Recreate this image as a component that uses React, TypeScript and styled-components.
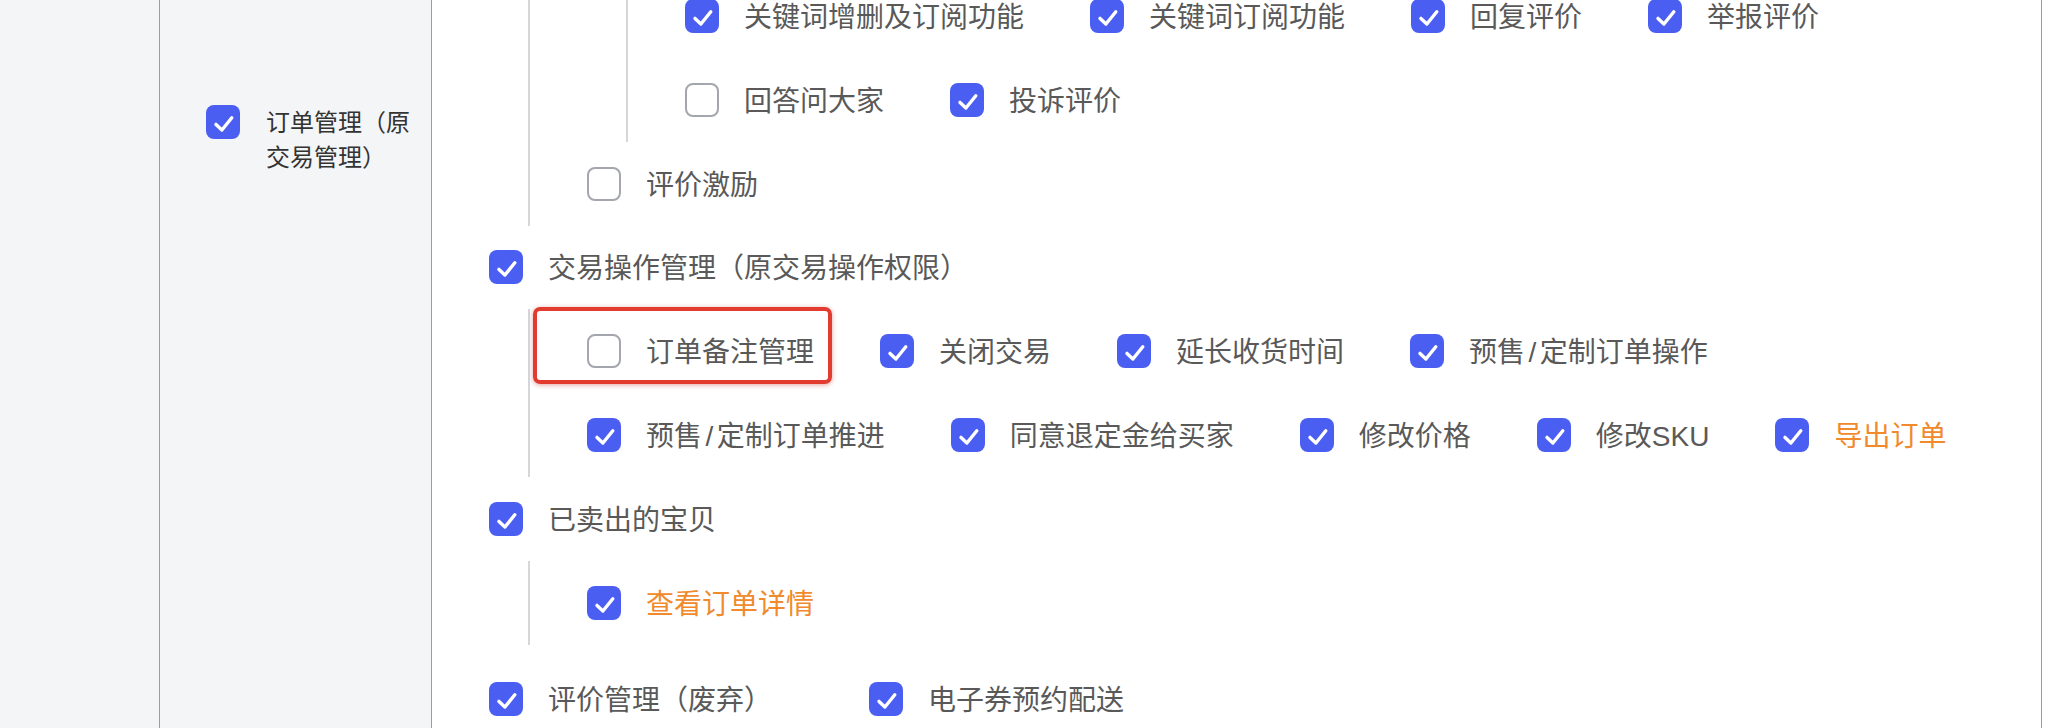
import React from "react";
import styled, { createGlobalStyle } from "styled-components";

const blue = "#4b5ef2";
const orange = "#f08a2c";
const ruleGray = "#9b9ca1";
const guideGray = "#d6d7db";
const panelGray = "#f4f5f7";

const GlobalStyle = createGlobalStyle`
	html,
	body {
		margin: 0;
		padding: 0;
		background: #fff;
		overflow: hidden;
	}

	body {
		font-family: "Liberation Sans", "Noto Sans CJK SC", sans-serif;
	}
`;

const Table = styled.div`
	display: grid;
	grid-template-columns: 160px 272px 1610px 1fr;
	width: 2068px;
	height: 728px;
	overflow: hidden;
`;

const Gutter = styled.div`
	background: ${panelGray};
	border-right: 1px solid ${ruleGray};
`;

const GroupCell = styled.div`
	display: flex;
	align-items: flex-start;
	gap: 26px;
	padding: 105px 0 0 46px;
	background: ${panelGray};
	border-right: 1px solid ${ruleGray};
`;

const GroupLabel = styled.span`
	flex: 0 0 150px;
	font-size: 24px;
	line-height: 35px;
	color: #333;
`;

const TreeCell = styled.div`
	padding-left: 57px;
	background: #fff;
	border-right: 1px solid ${ruleGray};
	overflow: hidden;
`;

const Tree = styled.div`
	margin-top: -25.8px;
`;

const Branch = styled.div<{ $spaced?: boolean }>`
	margin-bottom: ${(p) => (p.$spaced ? "12.6px" : "0")};
`;

const Row = styled.div`
	display: flex;
	align-items: center;
	height: 83.8px;
`;

const Children = styled.div`
	margin-left: 39px;
	padding-left: 57px;
	border-left: 2px solid ${guideGray};
`;

const Item = styled.label<{ $space: number }>`
	position: relative;
	display: flex;
	align-items: center;
	gap: 25px;
	height: 40px;
	margin-right: ${(p) => p.$space}px;
`;

const Box = styled.span<{ $checked: boolean }>`
	display: flex;
	align-items: center;
	justify-content: center;
	flex: none;
	box-sizing: border-box;
	width: 34px;
	height: 34px;
	border-radius: 8px;
	background: ${(p) => (p.$checked ? blue : "#fff")};
	border: ${(p) => (p.$checked ? "none" : "2px solid #a4a6ae")};
`;

const Text = styled.span<{ $accent?: boolean }>`
	box-sizing: border-box;
	height: 40px;
	padding-top: 3px;
	font-size: 28px;
	line-height: 37px;
	white-space: nowrap;
	color: ${(p) => (p.$accent ? orange : "#595959")};
`;

// the "/" in labels like 预售/定制 is set a little wider than the Latin glyph
const Slash = styled.span`
	margin: 0 3.5px;
`;

// red annotation frame drawn over one option
const Marker = styled.span`
	position: absolute;
	top: -24px;
	bottom: -13px;
	left: -54px;
	right: -18px;
	border: 4px solid #e23b2f;
	border-radius: 7px;
	box-shadow: 0 1px 5px rgba(180, 30, 20, 0.4);
	pointer-events: none;
`;

const Check: React.FC<{ checked: boolean }> = ({ checked }) => (
	<Box $checked={checked}>
		{checked && (
			<svg width="34" height="34" viewBox="0 0 34 34">
				<path
					d="M10 19.4 L15.9 25 L25.8 12.8"
					fill="none"
					stroke="#fff"
					strokeWidth="3.4"
					strokeLinecap="round"
					strokeLinejoin="round"
				/>
			</svg>
		)}
	</Box>
);

const renderLabel = (label: string) =>
	label.split("/").map((part, i) => (
		<React.Fragment key={i}>
			{i > 0 && <Slash>/</Slash>}
			{part}
		</React.Fragment>
	));

type Option = {
	label: string;
	checked?: boolean;
	accent?: boolean;
	marked?: boolean;
};

type Node = {
	row?: Option[];
	space?: number;
	children?: Node[];
	spaced?: boolean;
};

const on = (label: string, extra: Partial<Option> = {}): Option => ({
	label,
	checked: true,
	...extra,
});
const off = (label: string, extra: Partial<Option> = {}): Option => ({
	label,
	checked: false,
	...extra,
});

const permissions: Node[] = [
	{
		children: [
			{
				children: [
					{
						row: [
							on("关键词增删及订阅功能"),
							on("关键词订阅功能"),
							on("回复评价"),
							on("举报评价"),
						],
					},
					{ row: [off("回答问大家"), on("投诉评价")] },
				],
			},
			{ row: [off("评价激励")] },
		],
	},
	{
		row: [on("交易操作管理（原交易操作权限）")],
		children: [
			{
				row: [
					off("订单备注管理", { marked: true }),
					on("关闭交易"),
					on("延长收货时间"),
					on("预售/定制订单操作"),
				],
			},
			{
				row: [
					on("预售/定制订单推进"),
					on("同意退定金给买家"),
					on("修改价格"),
					on("修改SKU"),
					on("导出订单", { accent: true }),
				],
			},
		],
	},
	{
		row: [on("已卖出的宝贝")],
		children: [{ row: [on("查看订单详情", { accent: true })] }],
		spaced: true,
	},
	{
		row: [on("评价管理（废弃）"), on("电子券预约配送")],
		space: 97,
	},
];

const TreeNode: React.FC<{ node: Node }> = ({ node }) => (
	<Branch $spaced={node.spaced}>
		{node.row && (
			<Row>
				{node.row.map((opt) => (
					<Item key={opt.label} $space={node.space ?? 66}>
						<Check checked={!!opt.checked} />
						<Text $accent={opt.accent}>{renderLabel(opt.label)}</Text>
						{opt.marked && <Marker />}
					</Item>
				))}
			</Row>
		)}
		{node.children && (
			<Children>
				{node.children.map((child, i) => (
					<TreeNode key={i} node={child} />
				))}
			</Children>
		)}
	</Branch>
);

const App: React.FC = () => {
	return (
		<>
			<GlobalStyle />
			<Table>
				<Gutter />
				<GroupCell>
					<Check checked />
					<GroupLabel>订单管理（原交易管理）</GroupLabel>
				</GroupCell>
				<TreeCell>
					<Tree>
						{permissions.map((node, i) => (
							<TreeNode key={i} node={node} />
						))}
					</Tree>
				</TreeCell>
				<div />
			</Table>
		</>
	);
};

export default App;
